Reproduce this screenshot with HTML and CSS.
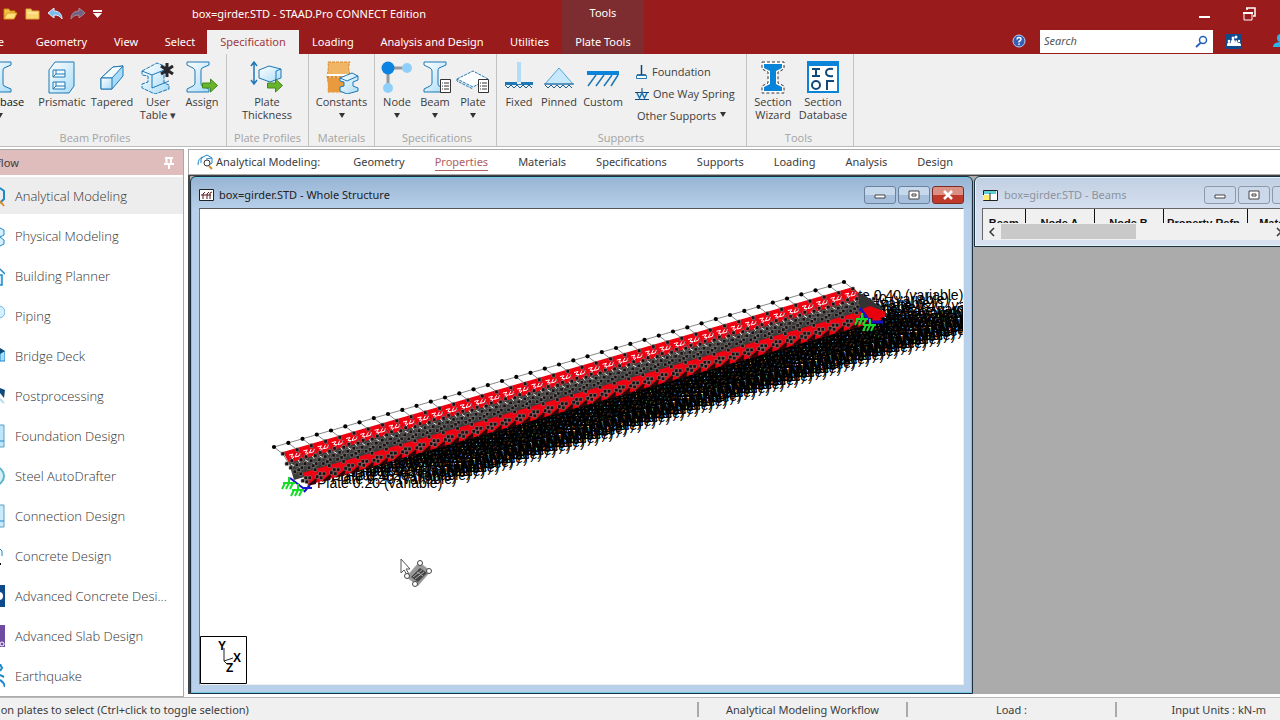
FILE: index.html
```html
<!DOCTYPE html>
<html lang="en">
<head>
<meta charset="utf-8">
<title>box=girder.STD - STAAD.Pro CONNECT Edition</title>
<link rel="stylesheet" href="styles.css">
</head>
<body>
<svg class="defs" aria-hidden="true">
  <defs>
    <linearGradient id="ice" x1="0" y1="0" x2="1" y2="1"><stop offset="0" stop-color="#fff"/><stop offset="1" stop-color="#a9dcf8"/></linearGradient>
    <symbol id="ibeam" viewBox="0 0 32 32"><path d="M1 1h22v3l-7 3q-1 1-1 3v12q0 2 1 3l7 3v3H1v-3l6-3q2-1 2-3V10q0-2-2-3L1 4z" fill="url(#ice)" stroke="#1d78b5"/></symbol>
    <symbol id="list" viewBox="0 0 11 14"><path d="M.5.5h10v13H.5z" fill="#fff" stroke="#333"/><path d="M2 4h1M2 7h1M2 10h1M4 4h5M4 7h5M4 10h5" stroke="#333"/></symbol>
    <symbol id="arrow" viewBox="0 0 16 14"><path d="M.5 4.500h8V.5l7 6.500-7 6.500v-4h-8z" fill="#6ab42d" stroke="#3f8a1c"/></symbol>
  </defs>
</svg>
<div class="app">
  <header class="top">
    <div class="titlebar">
      <div class="quick">
        <button aria-label="Open"><svg width="15" height="14"><path d="M1 12V2h5l1 2h5v2" fill="#f4c542" stroke="#c98a15"/><path d="M1 12l3-6h10l-3 6z" fill="#ffe07a" stroke="#d99b20"/></svg></button>
        <button aria-label="Open folder"><svg width="15" height="14"><path d="M1 2h5l1 2h7v8H1z" fill="#fbd774" stroke="#e2a93a"/><path d="M2 6h11" stroke="#fff0b5"/></svg></button>
        <button aria-label="Undo"><svg width="16" height="14"><path d="M1 6l6-5v3c5 0 8 3 8 8-2-3-4-4-8-4v3z" fill="#79bdf0" stroke="#dff0fb"/></svg></button>
        <button aria-label="Redo"><svg width="16" height="14"><path d="M15 6L9 1v3c-5 0-8 3-8 8 2-3 4-4 8-4v3z" fill="#6f6382" stroke="#a98a9b"/></svg></button>
        <button aria-label="Customize"><svg width="9" height="9"><path d="M0 1h9" stroke="#fff" stroke-width="2"/><path d="M0 3h9L4.500 8z" fill="#fff"/></svg></button>
      </div>
      <h1>box=girder.STD - STAAD.Pro CONNECT Edition</h1>
      <div class="wincmd">
        <button aria-label="Minimize"><svg width="11" height="14"><path d="M0 10h11" stroke="#fff" stroke-width="2"/></svg></button>
        <button aria-label="Restore"><svg width="13" height="14"><path d="M4 3V1h8v8h-2M3 1h9" fill="none" stroke="#fff" stroke-width="1.500"/><path d="M1 6h8v7H1z" fill="none" stroke="#fff"/><path d="M0 6h10" stroke="#fff" stroke-width="2"/></svg></button>
      </div>
    </div>
    <div class="tabrow">
      <nav class="tabs">
        <button class="tab file">File</button>
        <button class="tab t1">Geometry</button>
        <button class="tab t2">View</button>
        <button class="tab t3">Select</button>
        <button class="tab active">Specification</button>
        <button class="tab t4">Loading</button>
        <button class="tab t5">Analysis and Design</button>
        <button class="tab t6">Utilities</button>
      </nav>
      <div class="context"><span>Tools</span><button class="tab">Plate Tools</button></div>
      <div class="searchrow">
        <button aria-label="Help"><svg width="14" height="14"><circle cx="7" cy="7" r="6" fill="#3560b8" stroke="#b9cdf0"/><path d="M5 5.500q0-2 2-2t2 1.700q0 1.300-2 2.300v1M7 9.500v1.500" fill="none" stroke="#fff" stroke-width="1.400"/></svg></button>
        <label class="search"><input type="text" placeholder="Search" aria-label="Search"><svg width="13" height="13"><circle cx="8" cy="5" r="3.500" fill="none" stroke="#2460c0" stroke-width="1.500"/><path d="M5.500 8L1 12" stroke="#2460c0" stroke-width="1.800"/></svg></label>
        <button aria-label="Communities"><svg width="16" height="15"><path d="M0 0h16v15H0z" fill="#0e4a8c"/><path d="M1 12q0-4 2-4 1 0 1.500 1.500Q5 5 7 5t2 4q.5-5 2-2l1 2q3-1 3 3z" fill="#fff"/><circle cx="3" cy="7" r="1.300" fill="#fff"/><circle cx="7" cy="4" r="1.500" fill="#fff"/><circle cx="10" cy="3" r="1.500" fill="#fff"/><circle cx="13" cy="7" r="1.200" fill="#fff"/></svg></button>
        <button class="user" aria-label="Account"><svg width="14" height="14"><circle cx="8" cy="4" r="4" fill="#29b6ee"/><path d="M0 13q0-5 8-5t8 5z" fill="#29b6ee"/></svg></button>
      </div>
    </div>
  </header>

  <section class="ribbon">
    <div class="group g1">
      <div class="tools">
        <button class="tool wide cut"><svg width="32" height="33"><use href="#ibeam" x="4" width="32" height="32"/></svg><span>Database</span><i></i></button>
        <button class="tool w50"><svg width="32" height="33"><path d="M3 9l6-8h19v24l-5 7H3z" fill="url(#ice)" stroke="#1d78b5"/><path d="M7 9h12v7H7zM7 21h12v7H7z" fill="#f4fbff" stroke="#1d78b5"/><path d="M7 16l3-3h9M7 28l3-3h9M10 9v4M10 21v4" fill="none" stroke="#1d78b5"/></svg><span>Prismatic</span></button>
        <button class="tool w50"><svg width="32" height="33"><path d="M5 17L17 6l10-1v10L16 28H5z" fill="#a9dcf8" stroke="#1d78b5"/><path d="M5 17L17 6l10-1-11 12z" fill="#f4fbff" stroke="#1d78b5"/><path d="M5 17h11v11H5z" fill="url(#ice)" stroke="#1d78b5"/></svg><span>Tapered</span></button>
        <button class="tool w42"><svg width="34" height="33"><path d="M1 10L16 2l12 5v4l-5 2v9l5 2v4l-14 5L1 27v-4l6-2v-6l-6-1z" fill="url(#ice)" stroke="#1d78b5" stroke-dasharray="4 1"/><path d="M1 10l10 4 17-7M11 14v13l17-7" fill="none" stroke="#1d78b5"/><path d="M26 2v14M20 5l12 8M32 5l-12 8" stroke="#27272b" stroke-width="3"/></svg><span>User<br>Table ▾</span></button>
        <button class="tool w46"><svg width="34" height="33"><use href="#ibeam" x="1" width="32" height="32"/><use href="#arrow" x="17" y="17" width="16" height="15"/></svg><span>Assign</span></button>
      </div>
      <h2>Beam Profiles</h2>
    </div>
    <div class="group g2">
      <div class="tools"><button class="tool wide"><svg width="34" height="33"><path d="M4 2v20M1 5l3-4 3 4M1 19l3 4 3-4" fill="none" stroke="#1d78b5" stroke-width="1.500"/><path d="M9 9l10-4 12 3v9l-11 4-11-4z" fill="url(#ice)" stroke="#1d78b5"/><path d="M31 8l-5 2v8" fill="none" stroke="#1d78b5"/><use href="#arrow" x="17" y="17" width="16" height="15"/></svg><span>Plate<br>Thickness</span></button></div>
      <h2>Plate Profiles</h2>
    </div>
    <div class="group g3">
      <div class="tools"><button class="tool wide"><svg width="34" height="33"><path d="M3 1h22q-3 6 1 14-3 7-1 16H3q1-8-1-16 2-8 1-14z" fill="#f0b565" stroke="#d98a2c" stroke-dasharray="3 1"/><path d="M2 17h24q-2 6-1 14H3q1-8-1-14z" fill="#e89a3c"/><path d="M2 14h24" stroke="#fff" stroke-width="2"/><path d="M2 16h24" stroke="#aa6a22" stroke-dasharray="2 2"/><path d="M15 17l12-5 6 3v4l-5 2v4l5 2v3l-11 3-7-3v-4l4-1v-4l-4-1z" fill="url(#ice)" stroke="#1d78b5"/><path d="M15 17l7 3 11-5" fill="none" stroke="#1d78b5"/></svg><span>Constants</span><i></i></button></div>
      <h2>Materials</h2>
    </div>
    <div class="group g4">
      <div class="tools">
        <button class="tool w38"><svg width="32" height="33"><path d="M7 7h20M7 7v20" stroke="#999" stroke-width="3"/><circle cx="7" cy="7" r="6.500" fill="#0a84e0"/><circle cx="26" cy="7" r="5" fill="#8fd0fb"/><circle cx="7" cy="27" r="5" fill="#8fd0fb"/></svg><span>Node</span><i></i></button>
        <button class="tool w38"><svg width="32" height="33"><use href="#ibeam" x="4" width="32" height="32"/><use href="#list" x="21" y="18" width="11" height="14"/></svg><span>Beam</span><i></i></button>
        <button class="tool w38"><svg width="34" height="33"><path d="M1 18l16-8 15 8-15 8z" fill="#fff" stroke="#1d78b5" stroke-dasharray="3 1"/><path d="M1 18v2l16 8" fill="none" stroke="#1d78b5" stroke-dasharray="3 1"/><use href="#list" x="22" y="18" width="11" height="14"/></svg><span>Plate</span><i></i></button>
      </div>
      <h2>Specifications</h2>
    </div>
    <div class="group g5">
      <div class="tools">
        <button class="tool w38"><svg width="30" height="33"><path d="M13 1h4v20h-4z" fill="#b4dcf8"/><path d="M1 21h12v2h4v-2h12v3H1z" fill="#1d78b5"/><path d="M1 24l3 3 3-3 3 3 3-3 3 3 3-3 3 3 3-3 3 3" fill="none" stroke="#1d5f90"/></svg><span>Fixed</span></button>
        <button class="tool w42"><svg width="30" height="33"><path d="M15 7L29 23H1z" fill="#c8e8fd" stroke="#53a6dc"/><path d="M1 24l3 3 3-3 3 3 3-3 3 3 3-3 3 3 3-3 3 3M0 23h30" fill="none" stroke="#1d5f90"/></svg><span>Pinned</span></button>
        <button class="tool w46"><svg width="32" height="33"><path d="M0 12h32" stroke="#0a84d8" stroke-width="4"/><path d="M1 25l8-11M9 25l8-11M17 25l8-11M24 25l7-11" stroke="#1d78b5" stroke-width="1.500"/></svg><span>Custom</span></button>
        <div class="stack">
          <button><svg width="13" height="16"><path d="M6.500 1v10M2 11h9" stroke="#0e4a7c" stroke-width="1.500"/><path d="M1.500 11.500h10v3h-10z" fill="#fff" stroke="#1d78b5"/></svg>Foundation</button>
          <button><svg width="14" height="16"><path d="M7 2v5M0 6.500h14M0 13.500h14" stroke="#0e4a7c"/><path d="M2 7l2.500 5L7 7l2.500 5L12 7" fill="none" stroke="#1d78b5" stroke-width="1.500"/></svg>One Way Spring</button>
          <button>Other Supports <i></i></button>
        </div>
      </div>
      <h2>Supports</h2>
    </div>
    <div class="group g6">
      <div class="tools">
        <button class="tool w50"><svg width="26" height="33"><path d="M2 1h22v7l-6 3v11l6 3v7H2v-7l6-3V11L2 8z" fill="#fff" stroke="#333" stroke-dasharray="3 2"/><path d="M4 3h18v4l-6 3v13l6 3v4H4v-4l6-3V10L4 7z" fill="#0a84d8"/></svg><span>Section<br>Wizard</span></button>
        <button class="tool w50"><svg width="32" height="33"><path d="M1 1h30v30H1z" fill="#fff" stroke="#0a84d8" stroke-width="2"/><path d="M0 0h32v5H0z" fill="#0a84d8"/><path d="M5 8h8M9 8v7M5 15h8M26 8q-7-1-7 3.500t7 3.500M20 29V20h7" fill="none" stroke="#0e4a7c" stroke-width="2"/><circle cx="9" cy="24" r="4" fill="none" stroke="#0e4a7c" stroke-width="2"/></svg><span>Section<br>Database</span></button>
      </div>
      <h2>Tools</h2>
    </div>
  </section>

  <div class="body">
    <aside class="side">
      <div class="sidehead"><h2>Workflow</h2><button aria-label="Pin"><svg width="10" height="12"><path d="M1 1h8M2.500 1v5M7 1v5M0 7h10M5 7v5" stroke="#fff" stroke-width="2"/></svg></button></div>
      <ul>
        <li class="on"><svg width="5" height="24"><path d="M0 4l4 3v8l-4 4" fill="none" stroke="#1d88cc" stroke-width="2"/><path d="M0 17l4 5" stroke="#e08a20" stroke-width="2"/></svg><a href="#">Analytical Modeling</a></li>
        <li><svg width="5" height="24"><path d="M0 4l4 2v5l-4 2 4 3v4l-4 2" fill="#d5effc" stroke="#1d88cc"/></svg><a href="#">Physical Modeling</a></li>
        <li><svg width="5" height="24"><path d="M0 5l5 5M0 11h2v10H0" fill="#d5effc" stroke="#1d88cc" stroke-width="1.500"/></svg><a href="#">Building Planner</a></li>
        <li><svg width="5" height="24"><circle cx="-1" cy="8" r="6" fill="#d5effc" stroke="#6db4dd"/></svg><a href="#">Piping</a></li>
        <li><svg width="5" height="24"><path d="M0 5l5 3v9H0z" fill="#a9dcf8" stroke="#1d88cc"/><path d="M0 4l5 3-5 3z" fill="#0e4a7c"/></svg><a href="#">Bridge Deck</a></li>
        <li><svg width="5" height="24"><path d="M0 4l5 2-1 8-4-5z" fill="#0e4a7c"/><path d="M0 15l4 4" stroke="#b9dcef" stroke-width="2"/></svg><a href="#">Postprocessing</a></li>
        <li><svg width="5" height="24"><path d="M-2 1h6v22h-6z" fill="#bfe5fa" stroke="#5b9fc9"/><path d="M0 17h4" stroke="#1d88cc"/></svg><a href="#">Foundation Design</a></li>
        <li><svg width="5" height="24"><circle cx="-5" cy="12" r="9" fill="#d8f0f5" stroke="#5bb7cc" stroke-width="2"/></svg><a href="#">Steel AutoDrafter</a></li>
        <li><svg width="5" height="24"><path d="M-2 1h6v22h-6z" fill="#c9eafb" stroke="#5b9fc9"/><path d="M0 17h4" stroke="#1d88cc"/></svg><a href="#">Connection Design</a></li>
        <li><svg width="5" height="24"><path d="M0 5l2 2v5" fill="none" stroke="#1d88cc"/><path d="M0 20h1" stroke="#111" stroke-width="2"/></svg><a href="#">Concrete Design</a></li>
        <li><svg width="5" height="24"><path d="M0 1h5v22H0z" fill="#0e4a8c"/><circle cx="-1" cy="12" r="4" fill="#fff"/></svg><a href="#">Advanced Concrete Desi...</a></li>
        <li><svg width="5" height="24"><path d="M0 1h5v22H0z" fill="#6f4aa3"/><circle cx="2" cy="20" r="2" fill="none" stroke="#fff"/></svg><a href="#">Advanced Slab Design</a></li>
        <li><svg width="5" height="24"><path d="M0 0l2 4-2 3M0 11l4 2M0 16q4 2 5 7" fill="none" stroke="#1d88cc" stroke-width="2"/></svg><a href="#">Earthquake</a></li>
      </ul>
    </aside>

    <main class="work">
      <nav class="pages">
        <strong><svg width="17" height="16"><path d="M1 11q0-7 5-8l4-2 5 3v5l-3 2M6 3q-3 1-2 6M9 5l6-1" fill="none" stroke="#1d88cc"/><circle cx="10" cy="9" r="3" fill="#fff" stroke="#333"/><path d="M12 12l3 3" stroke="#e08a20" stroke-width="2"/></svg>Analytical Modeling:</strong>
        <a href="#">Geometry</a><a href="#" class="cur">Properties</a><a href="#">Materials</a><a href="#">Specifications</a><a href="#">Supports</a><a href="#">Loading</a><a href="#">Analysis</a><a href="#">Design</a>
      </nav>
      <div class="desk">
        <section class="win main">
          <div class="bar">
            <svg width="15" height="13"><path d="M.5.5h14v11H.5z" fill="#fff" stroke="#222"/><path d="M4 10V5l2-2M8 10V5l2-2M11 10V4l2-1M2 6h10" fill="none" stroke="#5a1a1a"/></svg>
            <h3>box=girder.STD - Whole Structure</h3>
            <button aria-label="Minimize window"><svg width="12" height="10"><path d="M1 5h10v3H1z" fill="#fff" stroke="#444"/></svg></button>
            <button aria-label="Maximize window"><svg width="12" height="10"><path d="M1 1h10v8H1zM4 4h4v2H4z" fill="#fff" stroke="#444"/></svg></button>
            <button class="close" aria-label="Close window"><svg width="12" height="10"><path d="M2 1l8 8M10 1L2 9" stroke="#fff" stroke-width="2.500"/></svg></button>
          </div>
          <div class="client">
            <svg class="model" id="model" role="img" aria-label="Box girder model"></svg>
            <svg class="axis" width="47" height="48"><path d="M.5.5h46v47H.5z" fill="#fff" stroke="#000"/><path d="M24 12v13l9-3M24 25l3 3" fill="none" stroke="#222"/><text x="18" y="14">Y</text><text x="33" y="26">X</text><text x="26" y="36">Z</text></svg>
            <svg class="pointer" width="34" height="30"><path d="M1 1v14l3-3 3 5 2-1-3-5h4z" fill="#fff" stroke="#555"/><path d="M6 19L19 4l12 9-13 15z" fill="#999"/><path d="M11 19l9-9 7 5-9 9z" fill="#444"/><path d="M13 19l9-7M15 21l9-7M17 14l6 4" stroke="#aaa"/><g fill="#fff" stroke="#444"><circle cx="20" cy="5" r="2.500"/><circle cx="29" cy="13" r="2.500"/><circle cx="7" cy="18" r="2.500"/><circle cx="15" cy="26" r="2.500"/></g></svg>
          </div>
        </section>
        <section class="win beams">
          <div class="bar">
            <svg width="15" height="13"><path d="M.5 1.500h14v10H.5z" fill="#fff" stroke="#222"/><path d="M1 2h12v3H1z" fill="#5ad0d8"/><path d="M0 6h6v5H0z" fill="#ffee70"/><path d="M7 4v7" stroke="#222"/></svg>
            <h3>box=girder.STD - Beams</h3>
            <button aria-label="Minimize window"><svg width="12" height="10"><path d="M1 5h10v3H1z" fill="#fff" stroke="#444"/></svg></button>
            <button aria-label="Maximize window"><svg width="12" height="10"><path d="M1 1h10v8H1zM4 4h4v2H4z" fill="#fff" stroke="#444"/></svg></button>
            <button aria-label="Close window"></button>
          </div>
          <div class="sheet">
            <div class="crop"><table><thead><tr><th class="c1">Beam</th><th class="c2">Node A</th><th class="c2">Node B</th><th class="c3">Property Refn.</th><th class="c4">Material</th></tr></thead></table></div>
            <div class="scroll"><button aria-label="Scroll left"><svg width="6" height="10"><path d="M5 1L1 5l4 4" fill="none" stroke="#333" stroke-width="1.500"/></svg></button><span class="thumb"></span><button aria-label="Scroll right"><svg width="6" height="10"><path d="M1 1l4 4-4 4" fill="none" stroke="#333" stroke-width="1.500"/></svg></button></div>
          </div>
        </section>
      </div>
    </main>
  </div>

  <footer class="status"><p class="hint"><span>Click on plates to select (Ctrl+click to toggle selection)</span></p><p class="s1">Analytical Modeling Workflow</p><p class="s2">Load :</p><p class="s3">Input Units : kN-m</p></footer>
</div>
<script src="model.js"></script>
</body>
</html>
```
FILE: styles.css
```css
* { box-sizing: border-box; }
body { margin: 0; font: 11px/16px "Noto Sans", "Open Sans", sans-serif; color: #3c3c3c; background: #fff; }
button { font: inherit; color: inherit; background: none; border: 0; padding: 0; }
h1, h2, h3, p, ul { margin: 0; padding: 0; font-weight: 400; font-size: inherit; }
a { color: inherit; text-decoration: none; }
svg { display: block; flex: none; }
.defs { position: absolute; width: 0; height: 0; }
.app { display: flex; flex-direction: column; height: 100vh; overflow: hidden; }

.top { background: #991b1b; color: #fff; height: 54px; flex: none; }
.titlebar { display: flex; align-items: center; height: 28px; }
.quick { display: flex; align-items: center; gap: 7px; padding-left: 3px; width: 192px; }
.titlebar h1 { flex: 1; }
.wincmd { display: flex; gap: 33px; padding-right: 24px; }
.tabrow { display: flex; height: 26px; }
.tabs { display: flex; padding-top: 2px; }
.tab { height: 24px; text-align: center; white-space: nowrap; flex: none; }
.file { width: 24px; margin-left: -20px; text-align: right; }
.t1 { width: 75px; margin-left: 20px; }
.t2 { width: 54px; }
.t3 { width: 54px; }
.active { width: 92px; background: #f0f0f0; color: #a0393b; }
.t4 { width: 68px; }
.t5 { width: 130px; }
.t6 { width: 65px; }
.context { display: flex; flex-direction: column; align-items: center; justify-content: space-between; width: 82px; margin-top: -28px; padding-top: 5px; background: #7d2d30; }
.searchrow { display: flex; flex: 1; justify-content: flex-end; align-items: center; overflow: hidden; }
.search { display: flex; align-items: center; width: 173px; height: 23px; margin: 0 13px 0 14px; padding: 0 5px 0 4px; background: #fff; }
.search input { flex: 1; min-width: 0; border: 0; padding: 0; font: inherit; outline: 0; }
.search input::placeholder { color: #555; font-style: italic; opacity: 1; }
.user { width: 7px; overflow: hidden; margin-left: 31px; }

.ribbon { display: flex; flex: none; height: 93px; background: #f0f0f0; border-bottom: 1px solid #bdbdbd; overflow: hidden; font-family: "Open Sans", "Noto Sans", sans-serif; }
.group { display: flex; flex-direction: column; border-right: 1px solid #c3c3c3; flex: none; }
.group h2 { text-align: center; color: #a3a3a3; }
.tools { display: flex; flex: 1; padding-top: 7px; }
.g1 { width: 227px; }
.g1 h2 { padding-right: 36px; }
.g2 { width: 82px; }
.g3 { width: 66px; }
.g4 { width: 122px; padding-left: 3px; }
.g5 { width: 250px; padding-left: 3px; }
.g5 h2, .g6 h2 { padding-right: 4px; }
.g6 { width: 107px; padding-left: 1px; }
.tool { display: flex; flex-direction: column; align-items: center; line-height: 13px; white-space: nowrap; flex: none; gap: 1px; }
.tool i, .stack i { border: 3px solid transparent; border-top: 5px solid #333; border-bottom: 0; margin-top: 4px; }
.wide { width: 74px; }
.g2 .wide { width: 80px; }
.g3 .wide { width: 65px; }
.cut { margin-left: -37px; color: #111; }
.w50 { width: 50px; }
.w46 { width: 46px; }
.w42 { width: 42px; }
.w38 { width: 38px; }
.stack { display: flex; flex-direction: column; gap: 6px; padding: 3px 0 0 9px; }
.stack button { display: flex; align-items: center; gap: 4px; height: 16px; white-space: nowrap; }
.stack button:last-child { padding-left: 2px; }
.stack i { margin: 0 0 3px 0; }

.body { display: flex; flex: 1; min-height: 0; padding-top: 2px; }
.side { width: 184px; flex: none; border: 1px solid #aaa; border-left: 0; overflow: hidden; }
.sidehead { display: flex; justify-content: space-between; align-items: center; height: 25px; padding-right: 9px; background: #dfbdbd; }
.sidehead h2 { margin-left: -30px; }
.side ul { list-style: none; }
.side li { display: flex; align-items: center; gap: 10px; height: 37px; margin-bottom: 3px; font: 300 13px/18px "Open Sans", "Noto Sans", sans-serif; white-space: nowrap; color: #333; }
.side .on { background: #ededed; margin-top: 2px; }
.work { display: flex; flex: 1; flex-direction: column; min-width: 0; padding-left: 4px; }
.pages { display: flex; align-items: center; height: 26px; flex: none; gap: 30px; padding-left: 8px; border: 1px solid #aaa; border-right: 0; white-space: nowrap; }
.pages strong { display: flex; align-items: center; gap: 2px; font-weight: 400; margin-right: 3px; }
.cur { color: #b0605f; border-bottom: 1px solid #b0605f; }
.desk { display: flex; flex: 1; min-height: 0; align-items: flex-start; background: #ababab; border: 1px solid #444; border-width: 1px 0 0 2px; margin-bottom: 3px; overflow: hidden; }

.win { display: flex; flex-direction: column; min-width: 0; border: 1px solid #1c3040; border-radius: 6px 6px 0 0; padding: 0 8px 8px; box-shadow: inset 0 0 0 1px #e6f3fb; }
.main { flex: 1; align-self: stretch; background: linear-gradient(#97b4d4, #b8d0e9 32px); box-shadow: inset 0 0 0 1px #72cbe6; }
.beams { flex: 0 0 339px; margin: 0 -33px 0 1px; padding: 0 8px 6px 7px; background: linear-gradient(#c0cfe2, #d6e0ef 32px); }
.bar { display: flex; align-items: center; gap: 2px; height: 31px; flex: none; padding-top: 5px; color: #222; }
.bar h3 { flex: 1; padding-left: 3px; }
.bar button { display: grid; place-items: center; width: 32px; height: 18px; border: 1px solid #6c829c; border-radius: 3px; background: linear-gradient(#c6d8ec 50%, #a5bfdd 50%); }
.bar .close { background: linear-gradient(#dc9084 50%, #bf3a2b 50%); border-color: #7c2c25; }
.beams .bar { color: #8c939c; padding-left: 1px; }
.beams .bar h3 { padding-left: 4px; }
.beams .bar button { background: #cbd8e9; border-color: #8a99ae; }
.client { position: relative; flex: 1; min-height: 0; background: #fff; border: 1px solid #555; border-color: #555 #eee #eee #777; overflow: hidden; }
.model { width: 100%; height: 100%; font: 14px "Liberation Sans", sans-serif; }
.axis { position: absolute; left: 0; bottom: 0; font: bold 12px "Liberation Sans", sans-serif; }
.pointer { position: absolute; left: 200px; top: 349px; }
.sheet { border: 1px solid #666; border-width: 1px 0 0 1px; background: #f0f0f0; overflow: hidden; }
.crop { height: 14px; overflow: hidden; }
table { border-collapse: collapse; table-layout: fixed; width: 330px; font: bold 11px/14px "Liberation Sans", sans-serif; color: #111; }
th { padding: 7px 0 0; border-right: 1px solid #111; white-space: nowrap; overflow: hidden; }
.c1 { width: 42px; }
.c2 { width: 69px; }
.c3 { width: 84px; }
.c4 { width: 66px; }
.scroll { display: flex; align-items: center; height: 17px; padding: 0 22px 0 6px; gap: 6px; }
.thumb { width: 135px; height: 15px; margin-right: auto; background: #c9c9c9; }

.status { display: flex; align-items: center; flex: none; height: 23px; border-top: 1px solid #bbb; background: #f0f0f0; white-space: nowrap; }
.status p { height: 15px; line-height: 15px; text-align: center; }
.hint { flex: 1; display: flex; }
.hint span { margin-left: -26px; }
.s1, .s2, .s3 { border-left: 2px solid #aaa; width: 209px; }
.status .s3 { width: 165px; text-align: right; padding-right: 14px; }
```
FILE: model.js
```js
// Draws the box girder: plate labels, red flange plates, mesh nodes and supports.
const svg = document.getElementById("model");
const bays = 40, dx = 14.25, dy = -4.125;
const out = [];
const at = (x, y, i) => [x + dx * i, y + dy * i];
const fmt = n => n.toFixed(1);

const labelRows = [[117, 279, 0], [131, 272, 0], [124, 275, 2], [110, 266, 2], [68, 256, 4]];
labelRows.forEach(([x, y, first], r) => {
  for (let i = first; i <= bays; i++) {
    const [px, py] = at(x, y, i);
    out.push(`<text x="${fmt(px)}" y="${fmt(py)}">Plate 0.${r ? 40 : 20} (variable)</text>`);
  }
});

const band = (x, y, h, fill) => {
  const [ex, ey] = at(x, y, bays);
  out.push(`<path d="M${x} ${y}L${fmt(ex)} ${fmt(ey)}l10 ${h}L${x + 6} ${y + h}z" fill="${fill}"/>`);
};
band(74, 238, 12, "#fff");
band(88, 251, 20, "#3c3c3c");
band(83, 243, 11, "#f00010");
band(102, 264, 12, "#f00010");

const mesh = [[9, 7], [13, 17], [18, 14], [17, 21], [23, 18], [28, 21], [21, 25], [25, 23], [30, 17], [27, 27], [32, 31], [29, 34], [33, 35], [36, 31]];
for (let i = 0; i <= bays; i++) {
  const [x, y] = at(74, 238, i);
  out.push(`<path d="M${fmt(x)} ${fmt(y)}l9 7 6 10 14 3" fill="none" stroke="#666" stroke-width="0.8"/>`);
  if (i < bays) {
    out.push(`<path d="M${fmt(x)} ${fmt(y)}l${dx} ${dy}" stroke="#888"/>`);
    out.push(`<path d="M${fmt(x + 15)} ${fmt(y + 8)}l4-1-2 3 3 0-3 3M${fmt(x + 23)} ${fmt(y + 6)}l-2 4 4-1 1-3" fill="none" stroke="#fff"/>`);
    out.push(`<path d="M${fmt(x + 33)} ${fmt(y + 39)}l10-9-1 7z" fill="#2c0606"/>`);
    out.push(`<path d="M${fmt(x + 17)} ${fmt(y + 17)}l3 2m4-6l2 3m-2 6l3-2" stroke="#f4f3e4"/>`);
  }
  mesh.forEach(([mx, my]) => out.push(`<rect x="${fmt(x + mx - 2)}" y="${fmt(y + my - 2)}" width="3.6" height="3.6" rx="1" fill="#1a1010" stroke="#8b8b8b" stroke-width="0.6"/>`));
  out.push(`<circle cx="${fmt(x)}" cy="${fmt(y)}" r="2.100"/>`);
}

const support = (x, y) => out.push(
  `<path d="M${x - 5} ${y}h12M${x + 1} ${y - 6}v6M${x - 6} ${y + 6}l3-6M${x - 2} ${y + 6}l3-6M${x + 2} ${y + 6}l3-6" stroke="#17dc27" stroke-width="2"/>`);
out.push(`<path d="M90 269l13 10h9M104 283l6-7" fill="none" stroke="#1414c8" stroke-width="2"/>`);
support(88, 274);
support(97, 281);
out.push(`<path d="M658 84l9 4 16 12-8 4-15-3z" fill="#333"/><path d="M662 100l8-3 16 6-1 5-8 2-12-3z" fill="#e8000c"/><path d="M660 99l10 14h13" fill="none" stroke="#1414c8" stroke-width="3"/>`);
support(661, 110);
support(669, 116);
svg.innerHTML = out.join("");
```
